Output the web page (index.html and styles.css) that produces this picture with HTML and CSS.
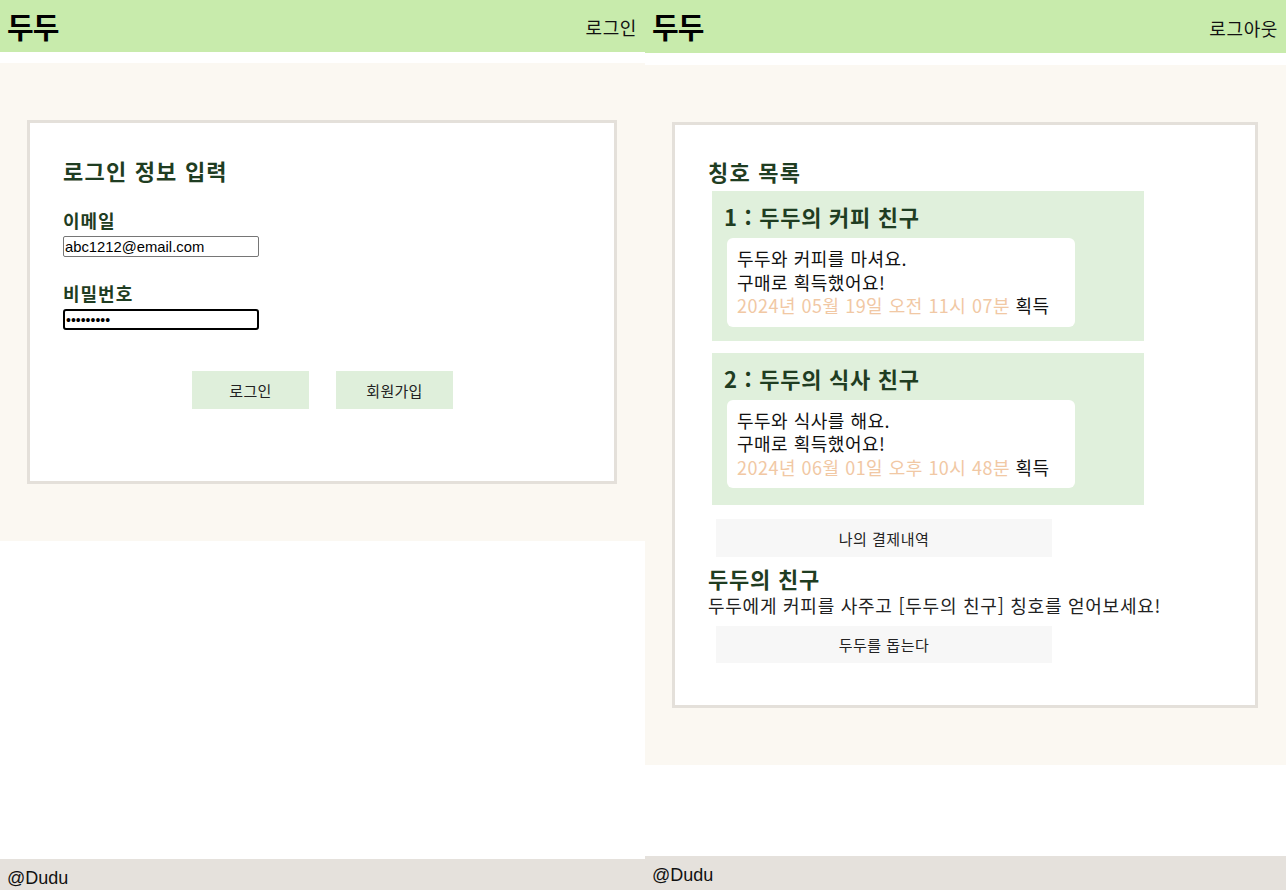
FILE: index.html
```html
<!DOCTYPE html>
<html lang="ko">
<head>
<meta charset="utf-8">
<title>두두</title>
<link rel="stylesheet" href="styles.css">
</head>
<body>
<div class="panel panel-left">
  <header class="topbar">
    <div class="logo">두두</div>
    <a class="nav-link">로그인</a>
  </header>
  <main class="stage stage-left">
    <section class="card login-card">
      <h2 class="card-title">로그인 정보 입력</h2>
      <label class="field-label">이메일</label>
      <input class="field" type="text" value="abc1212@email.com">
      <label class="field-label second">비밀번호</label>
      <input class="field focused" type="password" value="abcd12345">
      <div class="btn-row">
        <button class="btn-green">로그인</button>
        <button class="btn-green">회원가입</button>
      </div>
    </section>
  </main>
  <div class="spacer"></div>
  <footer class="footer footer-left">@Dudu</footer>
</div>

<div class="panel panel-right">
  <header class="topbar topbar-right">
    <div class="logo">두두</div>
    <a class="nav-link">로그아웃</a>
  </header>
  <main class="stage stage-right">
    <section class="card title-card">
      <h2 class="card-title">칭호 목록</h2>
      <div class="title-item">
        <h3 class="item-title">1 : 두두의 커피 친구</h3>
        <div class="item-body">
          <p>두두와 커피를 마셔요.</p>
          <p>구매로 획득했어요!</p>
          <p><span class="date">2024년 05월 19일 오전 11시 07분</span> 획득</p>
        </div>
      </div>
      <div class="title-item second-item">
        <h3 class="item-title">2 : 두두의 식사 친구</h3>
        <div class="item-body">
          <p>두두와 식사를 해요.</p>
          <p>구매로 획득했어요!</p>
          <p><span class="date">2024년 06월 01일 오후 10시 48분</span> 획득</p>
        </div>
      </div>
      <button class="btn-gray pay-btn">나의 결제내역</button>
      <h2 class="friend-title">두두의 친구</h2>
      <p class="friend-desc">두두에게 커피를 사주고 [두두의 친구] 칭호를 얻어보세요!</p>
      <button class="btn-gray help-btn">두두를 돕는다</button>
    </section>
  </main>
  <div class="spacer"></div>
  <footer class="footer footer-right">@Dudu</footer>
</div>
</body>
</html>
```

FILE: styles.css
```css
* { box-sizing: border-box; }
html, body { margin: 0; padding: 0; }
body {
  display: flex;
  width: 1286px;
  height: 890px;
  overflow: hidden;
  background: #ffffff;
  font-family: "Noto Sans CJK KR", "Noto Sans", sans-serif;
  color: #222;
}
.panel {
  display: flex;
  flex-direction: column;
  height: 890px;
}
.panel-left { width: 645px; }
.panel-right { width: 641px; }

.topbar {
  height: 52px;
  background: #c8ebac;
  display: flex;
  justify-content: space-between;
  align-items: center;
  padding: 0 8px 0 7px;
}
.topbar-right { height: 53px; }
.logo {
  font-size: 29px;
  font-weight: 700;
  color: #000;
  line-height: 1;
  letter-spacing: -1px;
}
.nav-link {
  font-size: 18px;
  color: #111;
  line-height: 1;
  padding-top: 2px;
  letter-spacing: 0.6px;
}

.stage {
  background: #fbf8f2;
}
.stage-left {
  margin-top: 11px;
  height: 478px;
  padding: 57px 28px 57px 27px;
}
.stage-right {
  margin-top: 12px;
  height: 700px;
  padding: 57px 28px 57px 27px;
}
.card {
  background: #fff;
  border: 3px solid #e4e0da;
  height: 100%;
}
.login-card {
  padding: 32px 33px;
  display: flex;
  flex-direction: column;
  align-items: flex-start;
}
.card-title {
  margin: 0;
  font-size: 22px;
  font-weight: 700;
  line-height: 30px;
  color: #1f3d22;
  letter-spacing: 1.2px;
}
.field-label {
  margin-top: 23px;
  font-size: 18px;
  font-weight: 700;
  line-height: 24px;
  color: #1f3d22;
  letter-spacing: 1px;
}
.field-label.second { margin-top: 24px; }
.field {
  margin-top: 4px;
  width: 196px;
  height: 21px;
  border: 1px solid #767676;
  border-radius: 2px;
  padding: 0 1px;
  font-family: "Liberation Sans", Arial, sans-serif;
  font-size: 14.8px;
  color: #000;
  background: #fff;
}
.field.focused {
  border: 2px solid #000;
  border-radius: 3px;
  outline: none;
  font-size: 14px;
}
.btn-row {
  align-self: stretch;
  margin-top: 41px;
  display: flex;
  justify-content: center;
  gap: 27px;
  padding-left: 1px;
}
.btn-green {
  width: 117px;
  height: 38px;
  border: none;
  background: #dfefdb;
  font-family: "Noto Sans CJK KR", sans-serif;
  font-size: 15px;
  letter-spacing: 0.3px;
  color: #222;
}

.title-card {
  padding: 31px 33px;
}
.title-item {
  margin: 5px 0 0 4px;
  width: 432px;
  background: #e0f0dc;
  padding: 10px 0 14px 12px;
}
.second-item { margin-top: 12px; padding-bottom: 17px; }
.item-title {
  margin: 0;
  font-size: 22px;
  font-weight: 700;
  line-height: 30px;
  color: #1f3d22;
  letter-spacing: 0.7px;
}
.item-body {
  margin: 7px 0 0 3px;
  width: 348px;
  background: #fff;
  border-radius: 6px;
  padding: 9px 10px 9px 10px;
}
.item-body p {
  margin: 0;
  font-size: 18px;
  line-height: 23.5px;
  color: #111;
  letter-spacing: 0.5px;
}
.date { color: #f1c8a4; }

.btn-gray {
  display: block;
  width: 336px;
  height: 38px;
  border: none;
  background: #f7f7f7;
  font-family: "Noto Sans CJK KR", sans-serif;
  font-size: 15px;
  letter-spacing: 0.5px;
  color: #222;
  margin-left: 8px;
}
.pay-btn { margin-top: 14px; }
.friend-title {
  margin: 8px 0 0 0;
  font-size: 22px;
  font-weight: 700;
  line-height: 26px;
  color: #1f3d22;
  letter-spacing: 0.8px;
}
.friend-desc {
  margin: 2px 0 0 0;
  font-size: 18px;
  line-height: 24px;
  color: #222;
  white-space: nowrap;
  letter-spacing: 0.75px;
}
.help-btn { margin-top: 9px; height: 37px; }

.spacer { flex: 1; }
.footer {
  background: #e5e1dc;
  font-family: "Liberation Sans", Arial, sans-serif;
  font-size: 18px;
  color: #111;
  padding-left: 7px;
  display: flex;
  align-items: flex-end;
}
.footer-left { height: 31px; padding-bottom: 1px; }
.footer-right { height: 34px; padding-bottom: 4px; }
```
